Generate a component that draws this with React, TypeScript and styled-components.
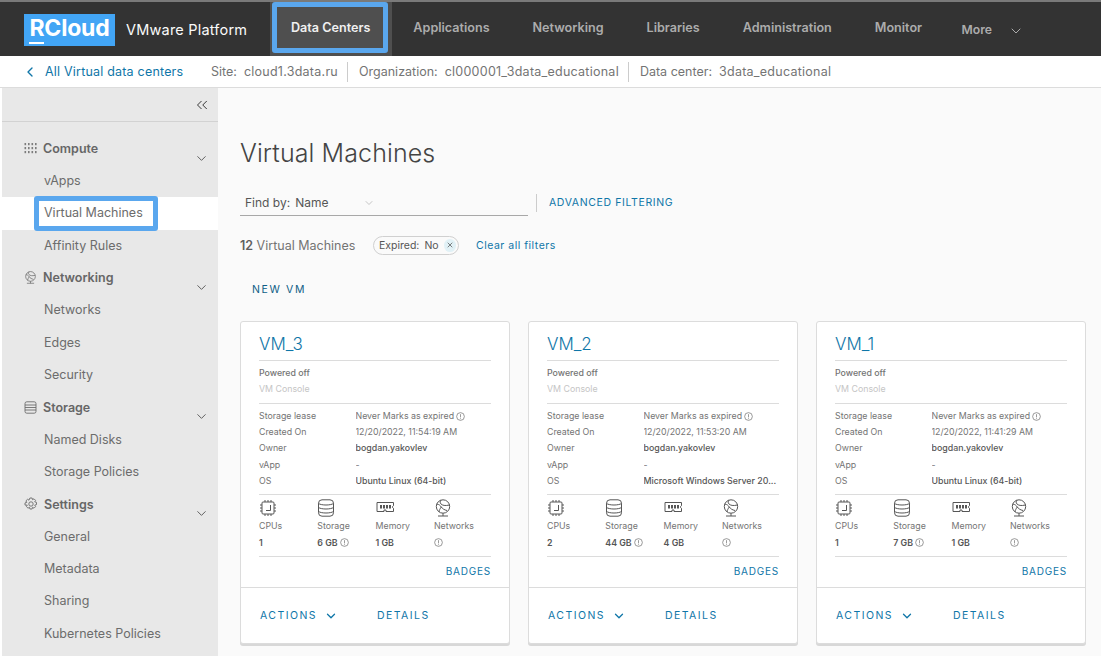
import styled, { createGlobalStyle } from "styled-components";
import { ChevronDown, ChevronLeft, ChevronsLeft, X } from "lucide-react";

const GlobalStyle = createGlobalStyle`
  html, body {
    margin: 0;
    padding: 0;
    height: 100%;
    overflow: hidden;
    background: #fff;
    font-family: Inter, "Open Sans", "Liberation Sans", sans-serif;
    color: #565656;
  }
  * { box-sizing: border-box; }
`;

const Page = styled.div`
  width: 1101px;
  height: 656px;
  display: flex;
  flex-direction: column;
  overflow: hidden;
`;

const Header = styled.header`
  height: 56px;
  flex: none;
  display: flex;
  background: #333;
  border-top: 2px solid #7a7a7a;
`;

const Brand = styled.div`
  width: 269.5px;
  flex: none;
  display: flex;
  align-items: center;
  padding: 0 0 0 24px;
  gap: 11px;
`;

const Logo = styled.div`
  width: 91px;
  height: 32px;
  margin-top: 2px;
  background: #42a5f5;
  color: #fff;
  font-size: 23px;
  font-weight: 700;
  line-height: 29px;
  text-align: center;
  letter-spacing: -0.2px;
  span { border-bottom: 2.5px solid #fff; }
`;

const Product = styled.div`
  color: #fafafa;
  font-size: 14.5px;
  letter-spacing: 0.2px;
`;

const Nav = styled.nav`
  display: flex;
  height: 100%;
`;

const NavItem = styled.div<{ $active?: boolean }>`
  position: relative;
  display: flex;
  align-items: center;
  padding: 0 21.5px;
  font-size: 12.6px;
  font-weight: 600;
  padding-bottom: 3px;
  color: ${(p) => (p.$active ? "#f0f0f0" : "#acacac")};
  background: ${(p) => (p.$active ? "#4f4f4f" : "transparent")};
`;

const MoreItem = styled(NavItem)`
  padding-left: 18px;
  padding-bottom: 0;
  font-size: 12.2px;
`;

const MoreChevron = styled.span`
  display: inline-flex;
  margin-left: 16px;
  margin-top: 3px;
`;

const NavHighlight = styled.span`
  position: absolute;
  left: 2.5px;
  top: 0;
  width: 116px;
  height: 51px;
  border: 5px solid #5aa7ee;
  border-radius: 3px;
`;

const SubBar = styled.div`
  height: 31px;
  flex: none;
  display: flex;
  align-items: center;
  background: #fff;
  font-size: 12.5px;
  color: #747474;
  padding-left: 22px;
`;

const BackLink = styled.a`
  display: flex;
  align-items: center;
  color: #0f76a8;
  width: 189px;
  gap: 7px;
  letter-spacing: 0.2px;
`;

const Crumb = styled.div<{ $last?: boolean }>`
  display: flex;
  gap: 7px;
  padding-right: 9px;
  margin-right: 11px;
  height: 20px;
  line-height: 20px;
  border-right: ${(p) => (p.$last ? "none" : "1px solid #ccc")};
`;

const CrumbValue = styled.span`
  letter-spacing: 0.25px;
`;

const Body = styled.div`
  flex: 1;
  display: flex;
  min-height: 0;
  border-top: 1px solid #dcdcdc;
  padding-left: 2px;
  background: #fff;
`;

const Sidebar = styled.aside`
  width: 216px;
  flex: none;
  background: #e8e8e8;
  overflow: hidden;
`;

const CollapseRow = styled.div`
  height: 34px;
  display: flex;
  align-items: center;
  justify-content: flex-end;
  padding-right: 7px;
  color: #333;
  border-bottom: 1px solid #d2d2d2;
  margin-bottom: 10.6px;
`;

const GroupHead = styled.div`
  position: relative;
  height: 32.35px;
  display: flex;
  align-items: center;
  padding-left: 22px;
  padding-bottom: 1px;
  gap: 6px;
  font-size: 12.5px;
  font-weight: 600;
  color: #666;
`;

const GroupChevron = styled(ChevronDown)`
  position: absolute;
  right: 9px;
  top: 18px;
  color: #565656;
`;

const SideItem = styled.div<{ $active?: boolean }>`
  position: relative;
  height: 32.35px;
  line-height: ${(p) => (p.$active ? "31px" : "32.35px")};
  padding-left: 42px;
  font-size: 12.5px;
  color: #6c6c6c;
  background: ${(p) => (p.$active ? "#fff" : "transparent")};
`;

const SideHighlight = styled.span`
  position: absolute;
  left: 32px;
  top: -1px;
  width: 124px;
  height: 35px;
  border: 5px solid #5aa7ee;
  border-radius: 3px;
`;

const Main = styled.main`
  flex: 1;
  background: #fafafa;
  padding: 49px 0 0 22px;
  overflow: hidden;
`;

const Title = styled.h1`
  margin: 0;
  font-size: 25px;
  font-weight: 300;
  line-height: 32px;
  color: #444;
  letter-spacing: 0.1px;
`;

const FilterRow = styled.div`
  display: flex;
  align-items: center;
  margin-top: 21px;
  height: 26px;
`;

const FindBy = styled.div`
  width: 288px;
  height: 26px;
  display: flex;
  align-items: center;
  padding-left: 5px;
  gap: 5px;
  font-size: 12px;
  color: #565656;
  border-bottom: 1px solid #a8a8a8;
`;

const FindChevron = styled(ChevronDown)`
  margin-left: 30px;
  color: #b3b3b3;
`;

const AdvancedLink = styled.a`
  margin-left: 8px;
  padding-left: 12px;
  border-left: 1px solid #ccc;
  height: 18px;
  line-height: 18px;
  font-size: 10.5px;
  font-weight: 400;
  letter-spacing: 0.62px;
  color: #0f76a8;
`;

const SummaryRow = styled.div`
  display: flex;
  align-items: center;
  margin-top: 19px;
  height: 20px;
  font-size: 12.5px;
  color: #747474;
`;

const Count = styled.span`
  width: 133px;
  b { font-weight: 600; color: #5f5f5f; }
`;

const Chip = styled.span`
  display: flex;
  align-items: center;
  height: 19px;
  width: 86px;
  padding-left: 5px;
  gap: 5px;
  border: 1px solid #d0d0d0;
  border-radius: 10px;
  font-size: 10.5px;
  color: #565656;
`;

const ChipClose = styled.span`
  display: inline-flex;
  align-items: center;
  justify-content: center;
  width: 13px;
  height: 13px;
  margin-left: auto;
  margin-right: 2px;
  border-radius: 50%;
  background: #e1f1f6;
  color: #444;
`;

const ClearLink = styled.a`
  margin-left: 17px;
  font-size: 10.5px;
  letter-spacing: 0.5px;
  color: #0f76a8;
`;

const NewVm = styled.a`
  display: block;
  margin: 25px 0 0 12px;
  height: 20px;
  line-height: 20px;
  font-size: 10.5px;
  font-weight: 400;
  letter-spacing: 1.65px;
  color: #0f5d86;
`;

const Cards = styled.div`
  display: flex;
  gap: 18px;
  margin-top: 21px;
`;

const Card = styled.article`
  width: 270px;
  height: 323px;
  flex: none;
  background: #fff;
  border: 1px solid #dcdcdc;
  border-radius: 3px;
  box-shadow: 0 2px 0 #d8d8d8;
  display: flex;
  flex-direction: column;
`;

const CardBody = styled.div`
  padding: 0 18px;
  flex: 1;
`;

const VmName = styled.div`
  height: 39px;
  line-height: 45px;
  font-size: 17px;
  font-weight: 300;
  color: #0f76a8;
  border-bottom: 1px solid #dcdcdc;
`;

const StatusBlock = styled.div`
  height: 43px;
  padding-top: 4px;
  border-bottom: 1px solid #dcdcdc;
`;

const StatusLine = styled.div<{ $muted?: boolean }>`
  height: 16px;
  line-height: 16px;
  font-size: 8.8px;
  font-weight: ${(p) => (p.$muted ? 400 : 500)};
  color: ${(p) => (p.$muted ? "#c5c5c5" : "#747474")};
`;

const PropList = styled.div`
  height: 91px;
  padding-top: 4px;
  border-bottom: 1px solid #dcdcdc;
`;

const PropRow = styled.div`
  display: grid;
  grid-template-columns: 96.5px 1fr;
  height: 16.2px;
  line-height: 16.2px;
  font-size: 8.8px;
  color: #747474;
`;

const PropValue = styled.span<{ $strong?: boolean }>`
  display: flex;
  align-items: center;
  gap: 2px;
  white-space: nowrap;
  overflow: hidden;
  font-weight: ${(p) => (p.$strong ? 500 : 400)};
  color: ${(p) => (p.$strong ? "#565656" : "#747474")};
`;

const Metrics = styled.div`
  display: grid;
  grid-template-columns: repeat(4, 58.3px);
  height: 62px;
  padding-top: 4px;
  border-bottom: 1px solid #dcdcdc;
`;

const Metric = styled.div`
  display: flex;
  flex-direction: column;
  font-size: 8.8px;
  color: #747474;
`;

const MetricIcon = styled.div`
  height: 19px;
  color: #565656;
  margin-bottom: 2px;
`;

const MetricValue = styled.span`
  display: flex;
  align-items: center;
  gap: 2px;
  height: 16px;
  margin-top: 3px;
  font-weight: 600;
  color: #565656;
`;

const BadgesRow = styled.div`
  height: 30px;
  line-height: 29px;
  text-align: right;
  font-size: 10px;
  font-weight: 400;
  letter-spacing: 0.8px;
  color: #0f76a8;
`;

const CardFooter = styled.div`
  height: 56px;
  flex: none;
  display: flex;
  align-items: center;
  padding-left: 19px;
  border-top: 1px solid #dcdcdc;
  font-size: 10.5px;
  font-weight: 400;
  letter-spacing: 1.45px;
  color: #0f76a8;
`;

const ActionsLink = styled.a`
  display: flex;
  align-items: center;
  width: 117px;
  gap: 7px;
`;

const InfoDot = () => (
  <svg width="9" height="9" viewBox="0 0 10 10" fill="none" stroke="#747474" strokeWidth="0.8">
    <circle cx="5" cy="5" r="4.3" />
    <path d="M5 2.4v3.6M5 7v.9" />
  </svg>
);

const ChipIcon = () => (
  <svg width="18" height="18" viewBox="0 0 18 18" fill="none" stroke="currentColor" strokeWidth="1">
    <rect x="3" y="3" width="12" height="12" rx="1" />
    <path d="M6 1v2M9 1v2M12 1v2M6 15v2M9 15v2M12 15v2M1 6h2M1 9h2M1 12h2M15 6h2M15 9h2M15 12h2M11.5 6v5.5H7" />
  </svg>
);

const DiskIcon = () => (
  <svg width="18" height="18" viewBox="0 0 18 18" fill="none" stroke="currentColor" strokeWidth="1">
    <rect x="1.5" y="0.8" width="15" height="16.4" rx="3.5" />
    <path d="M1.5 4.5c3 2 12 2 15 0M1.5 8.5c3 2 12 2 15 0M1.5 12.5c3 2 12 2 15 0" />
  </svg>
);

const MemoryIcon = () => (
  <svg width="18" height="18" viewBox="0 0 18 18" fill="none" stroke="currentColor" strokeWidth="1">
    <path d="M1 3.5h16.5v3.2l-1 .8v1l1 .8v3.2H10V11H8v1.5H1z" />
    <path d="M5 6v3.5M8 6v3.5M11 6v3.5M14 6v3.5" strokeWidth="2" />
  </svg>
);

const GlobeIcon = ({ size = 18 }: { size?: number }) => (
  <svg width={size} height={size} viewBox="0 0 18 18" fill="none" stroke="currentColor" strokeWidth="1">
    <circle cx="9" cy="7.5" r="6.7" />
    <path d="M2.8 5c2.5.5 3.5 1.5 4.5 3s3 3 5.700 3.500M7 1.100C6 2.500 5.800 3.800 6.800 4.800 8.500 6.500 11 7 15.500 6M5 13c.3-2 1-3.200 2.300-5M4 17h10M9 14.200V17" />
  </svg>
);

const GridIcon = () => (
  <svg width="13" height="13" viewBox="0 0 13 13" fill="#7c7c7c">
    {[1, 5, 9].flatMap((y) =>
      [0.5, 4, 7.5, 11].map((x) => <rect key={`${x}-${y}`} x={x} y={y} width="1.6" height="2.2" />)
    )}
  </svg>
);

const StackIcon = () => (
  <svg width="13" height="13" viewBox="0 0 13 13" fill="none" stroke="#6c6c6c" strokeWidth="0.9">
    <rect x="1" y="0.8" width="11" height="11.4" rx="1.8" />
    <path d="M1 4h11M1 6.5h11M1 9h11" />
  </svg>
);

const GearIcon = () => (
  <svg width="14" height="14" viewBox="0 0 14 14" fill="none" stroke="#6c6c6c" strokeWidth="0.9">
    <circle cx="7" cy="7" r="2.2" />
    <path d="M5.9 1h2.2l.4 1.7 1.5-.9 1.6 1.6-.9 1.5 1.8.5v2.200l-1.800.5.9 1.500-1.600 1.600-1.500-.9-.4 1.700H5.900l-.4-1.700-1.500.9-1.600-1.600.9-1.500L1 8.100V5.900l1.800-.5-.9-1.500L3.500 2.300l1.500.9z" />
  </svg>
);

type Vm = {
  name: string;
  created: string;
  os: string;
  cpus: string;
  storage: string;
  memory: string;
};

const vms: Vm[] = [
  { name: "VM_3", created: "12/20/2022, 11:54:19 AM", os: "Ubuntu Linux (64-bit)", cpus: "1", storage: "6 GB", memory: "1 GB" },
  { name: "VM_2", created: "12/20/2022, 11:53:20 AM", os: "Microsoft Windows Server 20...", cpus: "2", storage: "44 GB", memory: "4 GB" },
  { name: "VM_1", created: "12/20/2022, 11:41:29 AM", os: "Ubuntu Linux (64-bit)", cpus: "1", storage: "7 GB", memory: "1 GB" },
];

const navItems = ["Applications", "Networking", "Libraries", "Administration", "Monitor"];

function VmCard({ vm }: { vm: Vm }) {
  return (
    <Card>
      <CardBody>
        <VmName>{vm.name}</VmName>
        <StatusBlock>
          <StatusLine>Powered off</StatusLine>
          <StatusLine $muted>VM Console</StatusLine>
        </StatusBlock>
        <PropList>
          <PropRow>
            <span>Storage lease</span>
            <PropValue>Never Marks as expired <InfoDot /></PropValue>
          </PropRow>
          <PropRow>
            <span>Created On</span>
            <PropValue>{vm.created}</PropValue>
          </PropRow>
          <PropRow>
            <span>Owner</span>
            <PropValue $strong>bogdan.yakovlev</PropValue>
          </PropRow>
          <PropRow>
            <span>vApp</span>
            <PropValue>-</PropValue>
          </PropRow>
          <PropRow>
            <span>OS</span>
            <PropValue $strong>{vm.os}</PropValue>
          </PropRow>
        </PropList>
        <Metrics>
          <Metric>
            <MetricIcon><ChipIcon /></MetricIcon>
            CPUs
            <MetricValue>{vm.cpus}</MetricValue>
          </Metric>
          <Metric>
            <MetricIcon><DiskIcon /></MetricIcon>
            Storage
            <MetricValue>{vm.storage} <InfoDot /></MetricValue>
          </Metric>
          <Metric>
            <MetricIcon><MemoryIcon /></MetricIcon>
            Memory
            <MetricValue>{vm.memory}</MetricValue>
          </Metric>
          <Metric>
            <MetricIcon><GlobeIcon /></MetricIcon>
            Networks
            <MetricValue><InfoDot /></MetricValue>
          </Metric>
        </Metrics>
        <BadgesRow>BADGES</BadgesRow>
      </CardBody>
      <CardFooter>
        <ActionsLink>
          ACTIONS <ChevronDown size={14} strokeWidth={2.2} />
        </ActionsLink>
        <a>DETAILS</a>
      </CardFooter>
    </Card>
  );
}

export default function App() {
  return (
    <Page>
      <GlobalStyle />
      <Header>
        <Brand>
          <Logo><span>R</span>Cloud</Logo>
          <Product>VMware Platform</Product>
        </Brand>
        <Nav>
          <NavItem $active>
            Data Centers
            <NavHighlight />
          </NavItem>
          {navItems.map((item) => (
            <NavItem key={item}>{item}</NavItem>
          ))}
          <MoreItem>
            More
            <MoreChevron><ChevronDown size={16} strokeWidth={1.5} /></MoreChevron>
          </MoreItem>
        </Nav>
      </Header>
      <SubBar>
        <BackLink>
          <ChevronLeft size={16} strokeWidth={2} /> All Virtual data centers
        </BackLink>
        <Crumb><span>Site:</span><CrumbValue>cloud1.3data.ru</CrumbValue></Crumb>
        <Crumb><span>Organization:</span><CrumbValue>cl000001_3data_educational</CrumbValue></Crumb>
        <Crumb $last><span>Data center:</span><CrumbValue>3data_educational</CrumbValue></Crumb>
      </SubBar>
      <Body>
        <Sidebar>
          <CollapseRow><ChevronsLeft size={18} strokeWidth={1.3} /></CollapseRow>
          <GroupHead><GridIcon /> Compute <GroupChevron size={15} strokeWidth={1.5} /></GroupHead>
          <SideItem>vApps</SideItem>
          <SideItem $active>Virtual Machines<SideHighlight /></SideItem>
          <SideItem>Affinity Rules</SideItem>
          <GroupHead><GlobeIcon size={13} /> Networking <GroupChevron size={15} strokeWidth={1.5} /></GroupHead>
          <SideItem>Networks</SideItem>
          <SideItem>Edges</SideItem>
          <SideItem>Security</SideItem>
          <GroupHead><StackIcon /> Storage <GroupChevron size={15} strokeWidth={1.5} /></GroupHead>
          <SideItem>Named Disks</SideItem>
          <SideItem>Storage Policies</SideItem>
          <GroupHead><GearIcon /> Settings <GroupChevron size={15} strokeWidth={1.5} /></GroupHead>
          <SideItem>General</SideItem>
          <SideItem>Metadata</SideItem>
          <SideItem>Sharing</SideItem>
          <SideItem>Kubernetes Policies</SideItem>
        </Sidebar>
        <Main>
          <Title>Virtual Machines</Title>
          <FilterRow>
            <FindBy>
              <span>Find by:</span><span>Name</span>
              <FindChevron size={12} strokeWidth={1.5} />
            </FindBy>
            <AdvancedLink>ADVANCED FILTERING</AdvancedLink>
          </FilterRow>
          <SummaryRow>
            <Count><b>12</b> Virtual Machines</Count>
            <Chip>
              Expired: <span>No</span>
              <ChipClose><X size={8} strokeWidth={2} /></ChipClose>
            </Chip>
            <ClearLink>Clear all filters</ClearLink>
          </SummaryRow>
          <NewVm>NEW VM</NewVm>
          <Cards>
            {vms.map((vm) => (
              <VmCard key={vm.name} vm={vm} />
            ))}
          </Cards>
        </Main>
      </Body>
    </Page>
  );
}
